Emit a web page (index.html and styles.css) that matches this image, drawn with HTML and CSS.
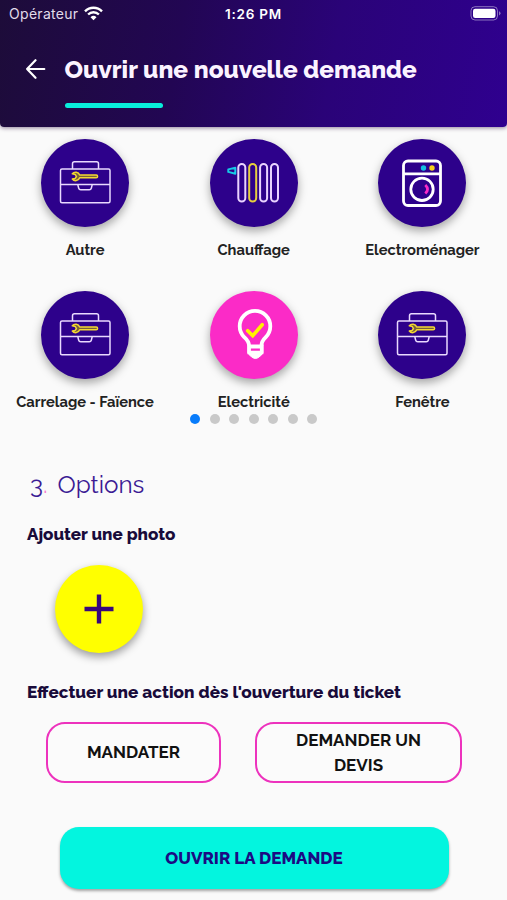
FILE: index.html
```html
<!DOCTYPE html>
<html lang="fr">
<head>
    <meta charset="UTF-8">
    <meta name="viewport" content="width=device-width, initial-scale=1.0">
    <title>Ouvrir une nouvelle demande</title>
    <link rel="stylesheet" href="styles.css">
</head>
<body>

    <!-- Shared icon -->
    <svg class="sprite" width="0" height="0">
        <symbol id="toolbox" viewBox="0 0 88 88">
            <g fill="none" stroke="#e9d9ff" stroke-width="1.5" stroke-linejoin="round">
                <rect x="19.5" y="30" width="49.5" height="33.7" rx="1.5"/>
                <path d="M31.5 30v-5.3q0-2 2-2h22q2 0 2 2V30M19.5 45.4H69M36.7 45.4l1 3.8q.4 1.5 2 1.5h8.6q1.6 0 2-1.5l1-3.8"/>
            </g>
            <path d="M31.3 34.8c2-2.6 6.2-2.1 7.4 1.2h16.5a1.3 1.3 0 0 1 0 2.8H38.7c-1.2 3.3-5.4 3.8-7.4 1.2l2.9-.6 1.2-1.9-1.2-2.1z" fill="#7a6238" stroke="#f2d832" stroke-width="1.5" stroke-linejoin="round"/>
        </symbol>
    </svg>

    <!-- Header -->
    <header class="header">
        <div class="status-bar">
            <div class="carrier">
                <span>Opérateur</span>
                <svg width="19" height="15" viewBox="0 0 19 15">
                    <g fill="none" stroke="#fff" stroke-width="2.4">
                        <path d="M1 5.3a12 12 0 0 1 17 0"/>
                        <path d="M4.1 8.5a7.7 7.7 0 0 1 10.8 0"/>
                    </g>
                    <path d="M9.5 14.2 6.5 11.2a4.3 4.3 0 0 1 6 0z" fill="#fff"/>
                </svg>
            </div>
            <span class="clock">1:26 PM</span>
            <svg class="battery" width="31" height="15" viewBox="0 0 31 15">
                <rect x="1" y=".7" width="26.5" height="13.3" rx="4" fill="none" stroke="#fff" stroke-opacity=".45"/>
                <rect x="3" y="2.8" width="22.5" height="9.2" rx="2.2" fill="#fff"/>
                <path d="M29 5.3q1.5.6 1.5 2T29 9.4z" fill="#fff" fill-opacity=".45"/>
            </svg>
        </div>
        <div class="title-bar">
            <svg class="back" width="20" height="20" viewBox="0 0 20 20">
                <path d="M9.5 1.2 1.1 10l8.4 8.8M1.1 10H18.3" fill="none" stroke="#fff" stroke-width="2.2" stroke-linecap="round" stroke-linejoin="round"/>
            </svg>
            <h1 class="title">Ouvrir une nouvelle demande</h1>
        </div>
        <div class="progress"></div>
    </header>

    <!-- Categories -->
    <section class="categories">
        <div class="category">
            <div class="circle"><svg><use href="#toolbox"/></svg></div>
            <span class="label">Autre</span>
        </div>
        <div class="category">
            <div class="circle">
                <svg viewBox="0 0 88 88" fill="none" stroke="#e9d3ff" stroke-width="2">
                    <rect x="28.3" y="25" width="7" height="37.5" rx="3.5"/>
                    <rect x="39.2" y="25" width="7" height="37.5" rx="3.5" stroke="#e6cf3d"/>
                    <rect x="50.1" y="25" width="7" height="37.5" rx="3.5"/>
                    <rect x="61" y="25" width="7" height="37.5" rx="3.5"/>
                    <path d="M25.3 28.8v5.9l-7-1.8v-2.5z" stroke="#16cbe6" stroke-width="2" stroke-linejoin="round"/>
                </svg>
            </div>
            <span class="label">Chauffage</span>
        </div>
        <div class="category">
            <div class="circle">
                <svg viewBox="0 0 88 88" fill="none" stroke="#fff" stroke-width="2.8">
                    <rect x="25.5" y="22" width="37" height="44.5" rx="4.5"/>
                    <path d="M25.5 34.8h37"/>
                    <circle cx="44" cy="50.3" r="11.2"/>
                    <circle cx="45.5" cy="29" r="2.7" fill="#14bfe0" stroke="none"/>
                    <circle cx="54" cy="29" r="2.7" fill="#f5cf1e" stroke="none"/>
                    <path d="M47.3 46q4.5 4.3 0 8.6" stroke="#fa2bc6"/>
                </svg>
            </div>
            <span class="label">Electroménager</span>
        </div>
        <div class="category">
            <div class="circle"><svg><use href="#toolbox"/></svg></div>
            <span class="label">Carrelage - Faïence</span>
        </div>
        <div class="category">
            <div class="circle selected">
                <svg viewBox="0 0 88 88" fill="none" stroke="#fff" stroke-width="3.8">
                    <path d="M39 54.5c0-4-2.3-6-4.8-8.4a15.3 15.3 0 1 1 21.6 0c-2.5 2.4-4.3 4.4-4.3 8.4"/>
                    <path d="M39 54v7.7h12.8V54M37.2 55.5h16.4" stroke-linejoin="round"/>
                    <path d="M39.3 61.5h12.2V64l-3.6 2.8q-2.5 1.5-5 0L39.3 64z" fill="#fff" stroke-width="1"/>
                    <path d="m37.7 39.7 5 5 9.5-11" stroke="#fff200" stroke-width="3.6" stroke-linecap="round"/>
                </svg>
            </div>
            <span class="label">Electricité</span>
        </div>
        <div class="category">
            <div class="circle"><svg><use href="#toolbox"/></svg></div>
            <span class="label">Fenêtre</span>
        </div>
    </section>

    <div class="dots">
        <span class="dot active"></span>
        <span class="dot"></span>
        <span class="dot"></span>
        <span class="dot"></span>
        <span class="dot"></span>
        <span class="dot"></span>
        <span class="dot"></span>
    </div>

    <!-- Options -->
    <main class="options">
        <h2 class="step"><span>3<i>.</i></span><span>Options</span></h2>
        <h3 class="subtitle subtitle-photo">Ajouter une photo</h3>
        <button class="add-photo" aria-label="Ajouter">
            <svg width="30" height="30" viewBox="0 0 30 30">
                <path d="M15 .5v29M.5 15h29" stroke="#38077c" stroke-width="4.4"/>
            </svg>
        </button>
        <h3 class="subtitle subtitle-action">Effectuer une action dès l'ouverture du ticket</h3>
        <div class="actions">
            <button class="action mandater">MANDATER</button>
            <button class="action devis">DEMANDER UN<br>DEVIS</button>
        </div>
        <button class="submit">OUVRIR LA DEMANDE</button>
    </main>

</body>
</html>
```
FILE: styles.css
```css
* {
    box-sizing: border-box;
}

body {
    margin: 0;
    height: 900px;
    overflow: hidden;
    background-color: #fafafa;
    font-family: Raleway, Lato, sans-serif;
}

h1, h2, h3 {
    margin: 0;
}

button {
    padding: 0;
    border: none;
    font-family: inherit;
}

svg {
    display: block;
}

.sprite {
    position: absolute;
}

/* Header */
.header {
    height: 127px;
    background: linear-gradient(100deg, #1d0c39 0%, #220653 35%, #2a0378 65%, #2f008f 100%);
    border-radius: 0 0 4px 4px;
    box-shadow: 0 1px 4px rgba(40, 10, 60, 0.5);
    color: #fff;
}

.status-bar {
    display: grid;
    grid-template-columns: 1fr auto 1fr;
    align-items: center;
    height: 27px;
    padding: 0 6px 0 9px;
    font-family: Inter, sans-serif;
    font-size: 14px;
}

.carrier {
    display: flex;
    align-items: center;
    gap: 6px;
    color: #e2dcea;
    letter-spacing: 0.3px;
}

.clock {
    margin-right: 3px;
    font-weight: 600;
    font-size: 13.5px;
    letter-spacing: 0.8px;
}

.battery {
    justify-self: end;
}

.title-bar {
    display: flex;
    align-items: center;
    gap: 19px;
    height: 75px;
    padding: 9px 0 0 25.5px;
}

.title {
    padding-top: 1px;
    font-size: 24.4px;
    font-weight: 800;
    line-height: 30px;
    white-space: nowrap;
    color: #fbf3ff;
}

.progress {
    width: 98px;
    height: 5px;
    margin: 1px 0 0 64.5px;
    border-radius: 3px;
    background-color: #08eedb;
}

/* Categories */
.categories {
    display: grid;
    grid-template-columns: repeat(3, 168.7px);
    grid-auto-rows: 152.5px;
    height: 287px;
    padding: 11.5px 0 0 0.7px;
}

.category {
    display: flex;
    flex-direction: column;
    align-items: center;
}

.circle {
    width: 88px;
    height: 88px;
    border-radius: 50%;
    background-color: #2d018b;
    box-shadow: 0 4px 10px rgba(0, 0, 0, 0.35);
}

.circle svg {
    width: 88px;
    height: 88px;
}

.selected {
    background-color: #fb2bc7;
}

.label {
    margin-top: 13px;
    font-size: 14.7px;
    font-weight: 700;
    line-height: 20px;
    white-space: nowrap;
    color: #222;
}

.dots {
    display: flex;
    justify-content: center;
    gap: 9.5px;
    padding-left: 0.5px;
}

.dot {
    width: 10px;
    height: 10px;
    border-radius: 50%;
    background-color: #c9c9c9;
}

.active {
    background-color: #087cfb;
}

/* Options */
.options {
    padding: 45px 27px 0;
}

.step {
    display: flex;
    gap: 10px;
    height: 32px;
    padding-left: 3px;
    font-size: 24.3px;
    font-weight: 400;
    line-height: 32px;
    color: #3b1b94;
}

.step i {
    font-style: normal;
    color: #f77bcf;
}

.subtitle {
    font-size: 17px;
    font-weight: 800;
    line-height: 24px;
    white-space: nowrap;
    color: #190b3a;
}

.subtitle-photo {
    margin-top: 21px;
}

.add-photo {
    display: flex;
    align-items: center;
    justify-content: center;
    width: 88px;
    height: 88px;
    margin: 19px 0 0 28px;
    border-radius: 50%;
    background-color: #ffff00;
    box-shadow: 0 4px 9px rgba(0, 0, 0, 0.38);
}

.subtitle-action {
    margin-top: 27px;
    font-size: 17.1px;
}

.actions {
    display: flex;
    gap: 34px;
    margin: 18px 0 0 19px;
}

.action {
    height: 61px;
    border: 2px solid #ed32bd;
    border-radius: 19px;
    background-color: #fbfbfb;
    font-size: 17px;
    font-weight: 700;
    line-height: 25px;
    color: #111;
}

.mandater {
    width: 175px;
}

.devis {
    width: 207px;
}

.submit {
    display: block;
    width: 389px;
    height: 62px;
    margin: 44px 0 0 32.5px;
    border-radius: 19px;
    background-color: #03f5df;
    box-shadow: 0 2px 3px rgba(0, 0, 0, 0.35);
    font-size: 17px;
    font-weight: 800;
    color: #1b0b83;
}
```
